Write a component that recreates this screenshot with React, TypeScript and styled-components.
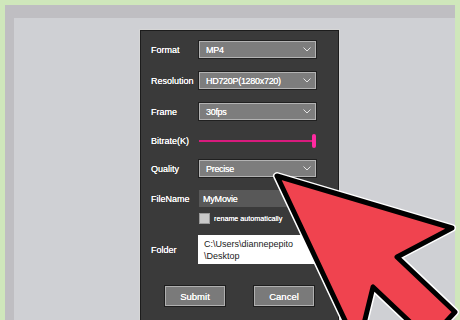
import React from "react";
import styled, { createGlobalStyle } from "styled-components";

const GlobalStyle = createGlobalStyle`
  html, body {
    margin: 0;
    padding: 0;
    background: #cfe7bb;
    font-family: "Liberation Sans", Arial, sans-serif;
  }
  #root {
    width: 460px;
    height: 320px;
    position: relative;
    overflow: hidden;
  }
`;

const Frame = styled.div`
  margin: 5px 5px 0 5px;
  width: 450px;
  height: 315px;
  background: #bfbec2;
  padding: 13px 0 0 9px;
  box-sizing: border-box;
  display: flex;
`;

const Screen = styled.div`
  flex: 1;
  background: #cfd0d4;
  padding: 11px 0 0 125px;
  overflow: hidden;
`;

const Dialog = styled.div`
  width: 201px;
  height: 300px;
  box-sizing: border-box;
  background: #3a3a3a;
  border: 1px solid #d6d6d6;
  border-bottom: none;
  box-shadow: inset 0 0 0 1px #1c1c1c;
  padding: 11px 0 0 11px;
  display: flex;
  flex-direction: column;
`;

const Row = styled.div<{ $h: number; $mt?: number }>`
  display: flex;
  align-items: center;
  height: ${(p) => p.$h}px;
  margin-top: ${(p) => p.$mt ?? 0}px;
`;

const Label = styled.div`
  width: 48px;
  flex: none;
  color: #fff;
  font-size: 9px;
  text-shadow: 0 0 0.6px #fff;
  white-space: nowrap;
`;

const Select = styled.div`
  width: 117px;
  height: 17px;
  box-sizing: border-box;
  background: #7d7d7d;
  border: 1px solid #b3b3b3;
  outline: 1px solid #202020;
  display: flex;
  align-items: center;
  justify-content: space-between;
  padding: 0 4px 0 6px;
  color: #fff;
  font-size: 9px;
  letter-spacing: -0.3px;
  text-shadow: 0 0 0.6px #fff;
`;

const Track = styled.div`
  position: relative;
  width: 117px;
  height: 2px;
  background: #d81b7d;
`;

const Thumb = styled.div`
  position: absolute;
  right: 0;
  top: -6px;
  width: 4px;
  height: 14px;
  border-radius: 2px;
  background: #ff2aa0;
`;

const TextInput = styled.div`
  width: 117px;
  height: 17px;
  box-sizing: border-box;
  background: #585858;
  display: flex;
  align-items: center;
  padding-left: 4px;
  color: #fff;
  font-size: 9px;
  letter-spacing: -0.2px;
  text-shadow: 0 0 0.6px #fff;
`;

const CheckRow = styled.div`
  display: flex;
  align-items: center;
  gap: 4px;
  margin: 5px 0 0 48px;
  height: 12px;
`;

const Box = styled.div`
  width: 11px;
  height: 11px;
  box-sizing: border-box;
  background: #c9c9c9;
  border: 1px solid #9a9a9a;
`;

const SmallText = styled.span`
  color: #fff;
  font-size: 7.2px;
  text-shadow: 0 0 0.5px #fff;
`;

const FolderBox = styled.div`
  width: 118px;
  height: 29px;
  box-sizing: border-box;
  background: #fff;
  padding: 3px 0 0 6px;
  color: #1a1a1a;
  font-size: 9px;
  line-height: 12px;
  margin-left: -1px;
`;

const Buttons = styled.div`
  display: flex;
  gap: 29px;
  margin: 22px 0 0 14px;
`;

const Button = styled.div`
  width: 60px;
  height: 20px;
  box-sizing: border-box;
  background: #7a7a7a;
  border: 1px solid #b0b0b0;
  outline: 1px solid #1e1e1e;
  display: flex;
  align-items: center;
  justify-content: center;
  color: #fff;
  font-size: 9.5px;
  text-shadow: 0 0 0.6px #fff;
`;

const Overlay = styled.svg`
  position: absolute;
  left: 0;
  top: 0;
  pointer-events: none;
`;

const Chevron = () => (
  <svg width="8" height="5" viewBox="0 0 8 5">
    <polyline points="0.5,0.5 4,4 7.5,0.5" fill="none" stroke="#e4e4e4" strokeWidth="1" />
  </svg>
);

const arrow =
  "277,176 452,228 397,257 455,312 429,340 373,287 358,348";

export default function App() {
  const selects: [string, string, number][] = [
    ["Format", "MP4", 0],
    ["Resolution", "HD720P(1280x720)", 14],
    ["Frame", "30fps", 14],
  ];
  return (
    <>
      <GlobalStyle />
      <Frame>
        <Screen>
          <Dialog>
            {selects.map(([label, value, mt]) => (
              <Row key={label} $h={17} $mt={mt}>
                <Label>{label}</Label>
                <Select>
                  {value}
                  <Chevron />
                </Select>
              </Row>
            ))}
            <Row $h={17} $mt={12}>
              <Label>Bitrate(K)</Label>
              <Track>
                <Thumb />
              </Track>
            </Row>
            <Row $h={17} $mt={11}>
              <Label>Quality</Label>
              <Select>
                Precise
                <Chevron />
              </Select>
            </Row>
            <Row $h={17} $mt={13}>
              <Label>FileName</Label>
              <TextInput>MyMovie</TextInput>
            </Row>
            <CheckRow>
              <Box />
              <SmallText>rename automatically</SmallText>
            </CheckRow>
            <Row $h={29} $mt={11}>
              <Label>Folder</Label>
              <FolderBox>
                C:\Users\diannepepito
                <br />
                \Desktop
              </FolderBox>
            </Row>
            <Buttons>
              <Button>Submit</Button>
              <Button>Cancel</Button>
            </Buttons>
          </Dialog>
        </Screen>
      </Frame>
      <Overlay width="460" height="320" viewBox="0 0 460 320">
        <polygon points={arrow} fill="none" stroke="#ffffff" strokeWidth="8" strokeLinejoin="round" />
        <polygon points={arrow} fill="#f0434f" stroke="#000" strokeWidth="5" strokeLinejoin="round" />
      </Overlay>
    </>
  );
}
